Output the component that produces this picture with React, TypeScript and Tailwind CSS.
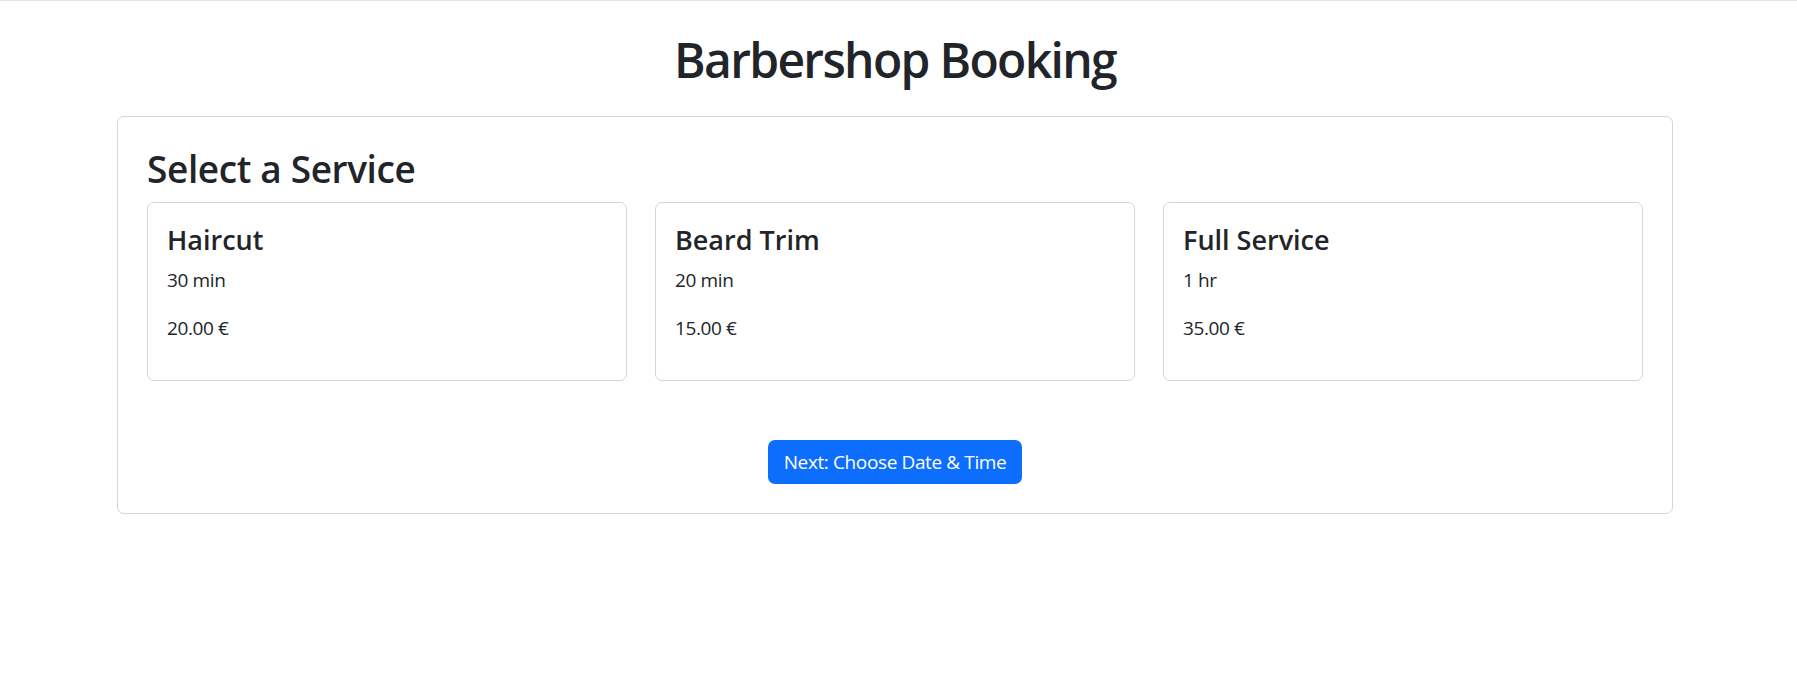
import React from "react";

const services = [
  { name: "Haircut", duration: "30 min", price: "20.00 €" },
  { name: "Beard Trim", duration: "20 min", price: "15.00 €" },
  { name: "Full Service", duration: "1 hr", price: "35.00 €" },
];

export default function App() {
  return (
    <div
      className="min-h-[679px] bg-white border-t border-[#dde4e4] text-[#212529] pr-[7px]"
      style={{ fontFamily: '"Open Sans", "Noto Sans", sans-serif' }}
    >
      <h1 className="mt-[30px] mb-[27px] text-center text-[48px] leading-[1.2] font-semibold tracking-[-0.035em]">
        Barbershop Booking
      </h1>
      <div className="mx-auto w-[1556px] rounded-[7px] border border-[#d5d5d5] px-[29px] pt-[30px] pb-[29px]">
        <h2 className="mb-[11px] text-[37px] leading-[1.2] font-semibold tracking-[-0.01em]">
          Select a Service
        </h2>
        <div className="grid grid-cols-3 gap-[28px]">
          {services.map((s) => (
            <div
              key={s.name}
              className="rounded-[7px] border border-[#d5d5d5] px-[19px] pt-[21px] pb-[19px]"
            >
              <h5 className="mb-[10px] text-[27px] leading-[1.2] font-semibold tracking-[0em]">
                {s.name}
              </h5>
              <p className="mb-[19px] text-[19px] leading-[1.5] tracking-[-0.02em]">{s.duration}</p>
              <p className="mb-[19px] text-[19px] leading-[1.5] tracking-[-0.02em]">{s.price}</p>
            </div>
          ))}
        </div>
        <div className="mt-[59px] flex justify-center">
          <button className="flex h-[44px] items-center rounded-[7px] bg-[#0d6efd] px-[16px] text-[19px] text-white tracking-[-0.02em]">
            Next: Choose Date &amp; Time
          </button>
        </div>
      </div>
    </div>
  );
}
